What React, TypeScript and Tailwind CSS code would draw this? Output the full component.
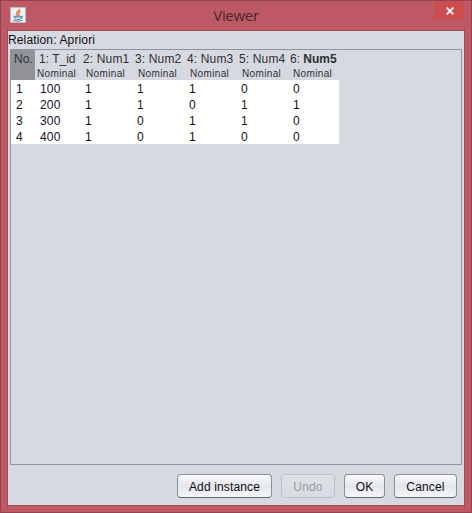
const columns = [
  { index: '1', name: 'T_id', width: 'w-[45px]', pad: 'pl-[4px]', sub: 'pl-[2px]', cell: 'pl-[5px]', spacing: 'tracking-normal' },
  { index: '2', name: 'Num1', width: 'w-[52px]', pad: 'pl-[3px]', sub: 'pl-[6px]', cell: 'pl-[5px]', spacing: 'tracking-[0.15px]' },
  { index: '3', name: 'Num2', width: 'w-[52px]', pad: 'pl-[3px]', sub: 'pl-[6px]', cell: 'pl-[5px]', spacing: 'tracking-[0.15px]' },
  { index: '4', name: 'Num3', width: 'w-[52px]', pad: 'pl-[3px]', sub: 'pl-[6px]', cell: 'pl-[5px]', spacing: 'tracking-[0.15px]' },
  { index: '5', name: 'Num4', width: 'w-[51px]', pad: 'pl-[3px]', sub: 'pl-[6px]', cell: 'pl-[5px]', spacing: 'tracking-[0.15px]' },
  { index: '6', name: 'Num5', width: 'w-[52px]', pad: 'pl-[3px]', sub: 'pl-[6px]', cell: 'pl-[6px]', spacing: 'tracking-normal', bold: true },
];

const rows = [
  ['100', '1', '1', '1', '0', '0'],
  ['200', '1', '1', '0', '1', '1'],
  ['300', '1', '0', '1', '1', '0'],
  ['400', '1', '0', '1', '0', '0'],
];

const buttons = [
  { label: 'Add instance', width: 'w-[95px]' },
  { label: 'Undo', width: 'w-[54px]', disabled: true },
  { label: 'OK', width: 'w-[41px]' },
  { label: 'Cancel', width: 'w-[63px]' },
];

function JavaIcon() {
  return (
    <svg width="16" height="16" viewBox="0 0 16 16" fill="none">
      <rect x="0.5" y="0.5" width="15" height="15" fill="#edf0f1" stroke="#b9bdc2" />
      <path d="M9.3 1.8C10 4 5.7 4.8 6.6 7c.3.8 1 1.1 1.2 2M10.8 4.2C8.8 4.9 8 5.8 8.8 6.9c.5.7.1 1.3-.3 1.8" stroke="#e0703f" strokeWidth="1.3" />
      <path d="M4 9.3h7.2v1.1c0 1.5-1 2.1-3.4 2.1S4.3 11.7 4 9.3ZM11.1 9.4c2.2-.6 2.1 1.6-.5 2M3 13.2c2 1.2 7.3 1.2 9.5 0" stroke="#557f9b" />
      <path d="M4.8 10.7h5.7" stroke="#91aaba" />
    </svg>
  );
}

function TitleBar() {
  return (
    <header className="flex h-[29px] shrink-0">
      <div className="w-[37px] pl-[9px] pt-[6px]"><JavaIcon /></div>
      <h1 className="grow pt-[4px] text-center font-['Open_Sans',sans-serif] text-[15px] leading-[20px] tracking-[-0.3px] text-[#4c242b]">Viewer</h1>
      <button aria-label="Close" className="mr-[7px] flex h-[19px] w-[30px] items-center justify-center bg-[#cb4d50] pl-[2px] pt-[1px]">
        <svg width="8" height="8" viewBox="0 0 8 8" stroke="white" strokeWidth="1.7">
          <path d="M.7.7l6.6 6.6M7.3.7L.7 7.3" />
        </svg>
      </button>
    </header>
  );
}

function DataTable() {
  return (
    <div className="w-[328px]">
      <div className="flex h-[30px] text-[#303035]">
        <div className="-ml-px w-[25px] shrink-0 bg-[#929299] pl-[4px] pt-[1px] leading-[16px] tracking-[0.1px]">No.</div>
        {columns.map((c) => (
          <div key={c.name} className={`${c.width} shrink-0 whitespace-pre pt-[1px]`}>
            <div className={`${c.pad} ${c.spacing} h-[16px] leading-[16px]`}>
              {c.index}: <span className={c.bold ? 'font-bold' : ''}>{c.name}</span>
            </div>
            <div className={`${c.sub} text-[10px] leading-[13px] tracking-[0.35px]`}>Nominal</div>
          </div>
        ))}
      </div>
      {rows.map((row, i) => (
        <div key={row[0]} className="flex h-[16px] bg-white leading-[19px] tracking-[0.15px] text-[#101014]">
          <div className="w-[24px] pl-[5px]">{i + 1}</div>
          {row.map((value, j) => (
            <div key={columns[j].name} className={`${columns[j].width} ${columns[j].cell}`}>{value}</div>
          ))}
        </div>
      ))}
    </div>
  );
}

export default function App() {
  return (
    <div className="flex h-[513px] w-[472px] flex-col border border-[#95424f] bg-[#bd5964] font-['Liberation_Sans',Arial,sans-serif] text-[12px]">
      <TitleBar />
      <main className="ml-[6px] mr-[6px] flex h-[476px] flex-col border border-[#9e4956] bg-[#d6d9df]">
        <div className="h-[18px] shrink-0 whitespace-nowrap leading-[18px] tracking-[0.14px] text-[#101014]">Relation: Apriori</div>
        <section className="ml-[2px] mr-[2px] h-[416px] shrink-0 border border-[#92959e]">
          <DataTable />
        </section>
        <footer className="mr-[7px] flex justify-end gap-[9px] pt-[9px]">
          {buttons.map((b) => (
            <button
              key={b.label}
              disabled={b.disabled}
              className={`${b.width} h-[24px] whitespace-nowrap rounded-[4px] border pt-[2px] leading-[20px] tracking-[0.15px] ${
                b.disabled
                  ? 'border-[#bdc1c8] bg-gradient-to-b from-[#dfe2e7] to-[#d8dbe1] text-[#999ca3]'
                  : 'border-[#8b8f97] border-b-[#62666d] bg-gradient-to-b from-[#fbfbfc] via-[#e4e6eb] to-[#f5f6f8] text-[#101014]'
              }`}
            >
              {b.label}
            </button>
          ))}
        </footer>
      </main>
    </div>
  );
}
